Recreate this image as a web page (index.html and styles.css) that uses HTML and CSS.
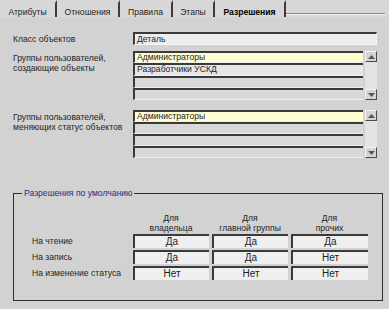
FILE: index.html
```html
<!DOCTYPE html>
<html>
<head>
    <title>Разрешения</title>
    <link rel="stylesheet" href="styles.css">
</head>
<body>
    <div class="tabs">
        <span class="tab tab-1">Атрибуты</span>
        <span class="tab tab-2">Отношения</span>
        <span class="tab tab-3">Правила</span>
        <span class="tab tab-4">Этапы</span>
        <span class="tab tab-5 active">Разрешения</span>
        <span class="tab-fill"></span>
    </div>

    <div class="page">

        <div class="row row-class">
            <div class="label">Класс объектов</div>
            <div class="field">Деталь</div>
        </div>

        <!-- groups that create objects -->
        <div class="row row-list">
            <div class="label">Группы пользователей,<br>создающие объекты</div>
            <div class="list">
                <div class="list-rows">
                    <div class="item selected">Администраторы</div>
                    <div class="item filled">Разработчики УСКД</div>
                    <div class="item"></div>
                    <div class="item"></div>
                </div>
                <div class="scroll">
                    <span class="scroll-btn"><svg width="7" height="4" viewBox="0 0 7 4"><path d="M0 4 L3.5 0 L7 4 Z" fill="#555"/></svg></span>
                    <span class="scroll-track"></span>
                    <span class="scroll-btn"><svg width="7" height="4" viewBox="0 0 7 4"><path d="M0 0 L3.5 4 L7 0 Z" fill="#555"/></svg></span>
                </div>
            </div>
        </div>

        <!-- groups that change status -->
        <div class="row row-list second">
            <div class="label">Группы пользователей,<br>меняющих статус объектов</div>
            <div class="list">
                <div class="list-rows">
                    <div class="item selected">Администраторы</div>
                    <div class="item"></div>
                    <div class="item"></div>
                    <div class="item"></div>
                </div>
                <div class="scroll">
                    <span class="scroll-btn"><svg width="7" height="4" viewBox="0 0 7 4"><path d="M0 4 L3.5 0 L7 4 Z" fill="#555"/></svg></span>
                    <span class="scroll-track"></span>
                    <span class="scroll-btn"><svg width="7" height="4" viewBox="0 0 7 4"><path d="M0 0 L3.5 4 L7 0 Z" fill="#555"/></svg></span>
                </div>
            </div>
        </div>

        <fieldset class="defaults">
            <legend>Разрешения по умолчанию</legend>
            <div class="perm-grid">
                <div></div>
                <div class="head">Для<br>владельца</div>
                <div class="head">Для<br>главной группы</div>
                <div class="head">Для<br>прочих</div>

                <div class="perm-label">На чтение</div>
                <div class="cell">Да</div>
                <div class="cell">Да</div>
                <div class="cell">Да</div>

                <div class="perm-label">На запись</div>
                <div class="cell">Да</div>
                <div class="cell">Да</div>
                <div class="cell">Нет</div>

                <div class="perm-label">На изменение статуса</div>
                <div class="cell">Нет</div>
                <div class="cell">Нет</div>
                <div class="cell">Нет</div>
            </div>
        </fieldset>

    </div>
</body>
</html>
```

FILE: styles.css
```css
body
{
    margin: 0;
    width: 389px;
    height: 309px;
    overflow: hidden;
    background: #d2d2d2;
    color: #1e1e1e;
    font-family: "Liberation Sans", Arial, sans-serif;
    font-size: 8.6px;
}

.tabs
{
    display: flex;
    height: 17px;
    background: #d8d8d8;
}

.tab
{
    box-sizing: border-box;
    height: 17px;
    padding-top: 4px;
    text-align: center;
    border-right: 2px solid #3c3c3c;
    border-top: 3px solid #d8d8d8;
    line-height: 10px;
}

.tab-1 { width: 57px; }
.tab-2 { width: 63px; }
.tab-3 { width: 53px; }
.tab-4 { width: 42px; }
.tab-5 { width: 71px; }

.tab.active
{
    font-weight: bold;
    color: #000;
}

.tab-fill
{
    flex: 1;
    height: 13px;
    border-bottom: 1px solid #8a8a8a;
    box-shadow: 0 1px 0 #f4f4f4;
    margin-right: 4px;
}

.page
{
    padding: 15px 0 0 13px;
}

.row
{
    display: flex;
}

.label
{
    width: 120px;
    line-height: 10px;
    padding-top: 2px;
}

.field
{
    box-sizing: border-box;
    width: 244px;
    height: 13px;
    padding-left: 2px;
    background: #ededed;
    border-top: 2px solid #3a3a3a;
    border-left: 2px solid #3a3a3a;
    border-right: 1px solid #f6f6f6;
    border-bottom: 1px solid #f6f6f6;
    line-height: 10px;
}

.row-list
{
    margin-top: 6px;
}

.row-list.second
{
    margin-top: 10px;
}

.list
{
    display: flex;
    width: 244px;
    height: 49px;
}

.second .list
{
    height: 48px;
}

.list-rows
{
    display: flex;
    flex-direction: column;
    width: 230px;
}

.item
{
    box-sizing: border-box;
    flex: 1;
    padding-left: 2px;
    background: #d9d9d9;
    border-top: 2px solid #3a3a3a;
    border-left: 2px solid #3a3a3a;
    border-bottom: 1px solid #efefef;
    line-height: 9px;
}

.item.selected
{
    background: #ffffd2;
}

.item.filled
{
    background: #e6e6e6;
}

.scroll
{
    display: flex;
    flex-direction: column;
    width: 12px;
    margin-left: 2px;
    background: #e4e4e4;
}

.scroll-track
{
    flex: 1;
}

.scroll-btn
{
    box-sizing: border-box;
    height: 11px;
    display: flex;
    align-items: center;
    justify-content: center;
    background: #d4d4d4;
    border-top: 1px solid #f4f4f4;
    border-left: 1px solid #f4f4f4;
    border-right: 1px solid #4a4a4a;
    border-bottom: 1px solid #4a4a4a;
}

.defaults
{
    box-sizing: border-box;
    width: 370px;
    height: 113px;
    margin: 30px 0 0 0;
    padding: 0;
    border: 1px solid #2e2e2e;
}

.defaults legend
{
    margin-left: 8px;
    padding: 0 2px;
    color: #2a2a86;
    line-height: 10px;
}

.perm-grid
{
    display: grid;
    grid-template-columns: 98px 76px 76px 77px;
    grid-template-rows: 19px 14px 14px 14px;
    column-gap: 3px;
    row-gap: 2px;
    margin: 15px 0 0 18px;
}

.head
{
    text-align: center;
    line-height: 10px;
}

.perm-label
{
    line-height: 14px;
}

.cell
{
    box-sizing: border-box;
    background: #efefef;
    border-top: 2px solid #3a3a3a;
    border-left: 2px solid #3a3a3a;
    text-align: center;
    font-size: 10px;
    line-height: 11px;
}
```
